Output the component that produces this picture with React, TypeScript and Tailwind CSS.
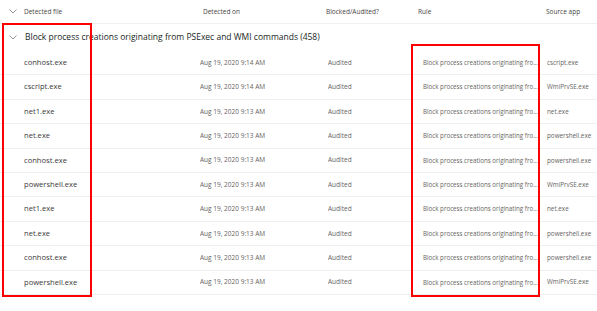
const rows = [
  { file: "conhost.exe", date: "Aug 19, 2020 9:14 AM", app: "cscript.exe" },
  { file: "cscript.exe", date: "Aug 19, 2020 9:14 AM", app: "WmiPrvSE.exe" },
  { file: "net1.exe", date: "Aug 19, 2020 9:13 AM", app: "net.exe" },
  { file: "net.exe", date: "Aug 19, 2020 9:13 AM", app: "powershell.exe" },
  { file: "conhost.exe", date: "Aug 19, 2020 9:13 AM", app: "powershell.exe" },
  { file: "powershell.exe", date: "Aug 19, 2020 9:13 AM", app: "WmiPrvSE.exe" },
  { file: "net1.exe", date: "Aug 19, 2020 9:13 AM", app: "net.exe" },
  { file: "net.exe", date: "Aug 19, 2020 9:13 AM", app: "powershell.exe" },
  { file: "conhost.exe", date: "Aug 19, 2020 9:13 AM", app: "powershell.exe" },
  { file: "powershell.exe", date: "Aug 19, 2020 9:13 AM", app: "WmiPrvSE.exe" },
]

const cols = "grid grid-cols-[24px_176px_126px_92px_123px_1fr] items-center"

function Chevron() {
  return (
    <svg width="8" height="5" viewBox="0 0 8 5" className="ml-[9px]">
      <path d="M0.5 0.5 L4 4 L7.5 0.5" fill="none" stroke="#8a8886" strokeWidth="0.9" />
    </svg>
  )
}

export default function App() {
  return (
    <div className="relative w-[597px] h-[311px] bg-white overflow-hidden font-['Open_Sans',sans-serif]">
      {/* header */}
      <div className={`${cols} h-[24px] border-b border-[#f0efee] text-[6.5px] text-[#484644]`}>
        <Chevron />
        <span>Detected file</span>
        <span className="pl-[3px]">Detected on</span>
        <span>Blocked/Audited?</span>
        <span>Rule</span>
        <span className="pl-[5px]">Source app</span>
      </div>

      {/* group row */}
      <div className="flex items-center h-[27px]">
        <Chevron />
        <span className="ml-[8px] text-[8.5px] text-[#201f1e]">
          Block process creations originating from PSExec and WMI commands (458)
        </span>
      </div>

      {rows.map((r, i) => (
        <div key={i} className={`${cols} h-[24.4px] border-b border-[#f0efee] text-[#666462]`}>
          <span />
          <span className="text-[7.6px] text-[#3b3a39]">{r.file}</span>
          <span className="text-[6.5px]">{r.date}</span>
          <span className="pl-[2px] text-[6.5px]">Audited</span>
          <span className="pl-[5px] text-[6.2px] whitespace-nowrap">
            Block process creations originating fro...
          </span>
          <span className="pl-[6px] text-[6.3px] whitespace-nowrap">{r.app}</span>
        </div>
      ))}

      {/* annotation boxes */}
      <div className="absolute left-[2px] top-[23px] w-[90px] h-[274px] border-2 border-[#ff0000]" />
      <div className="absolute left-[411px] top-[44px] w-[129px] h-[253px] border-2 border-[#ff0000]" />
    </div>
  )
}
